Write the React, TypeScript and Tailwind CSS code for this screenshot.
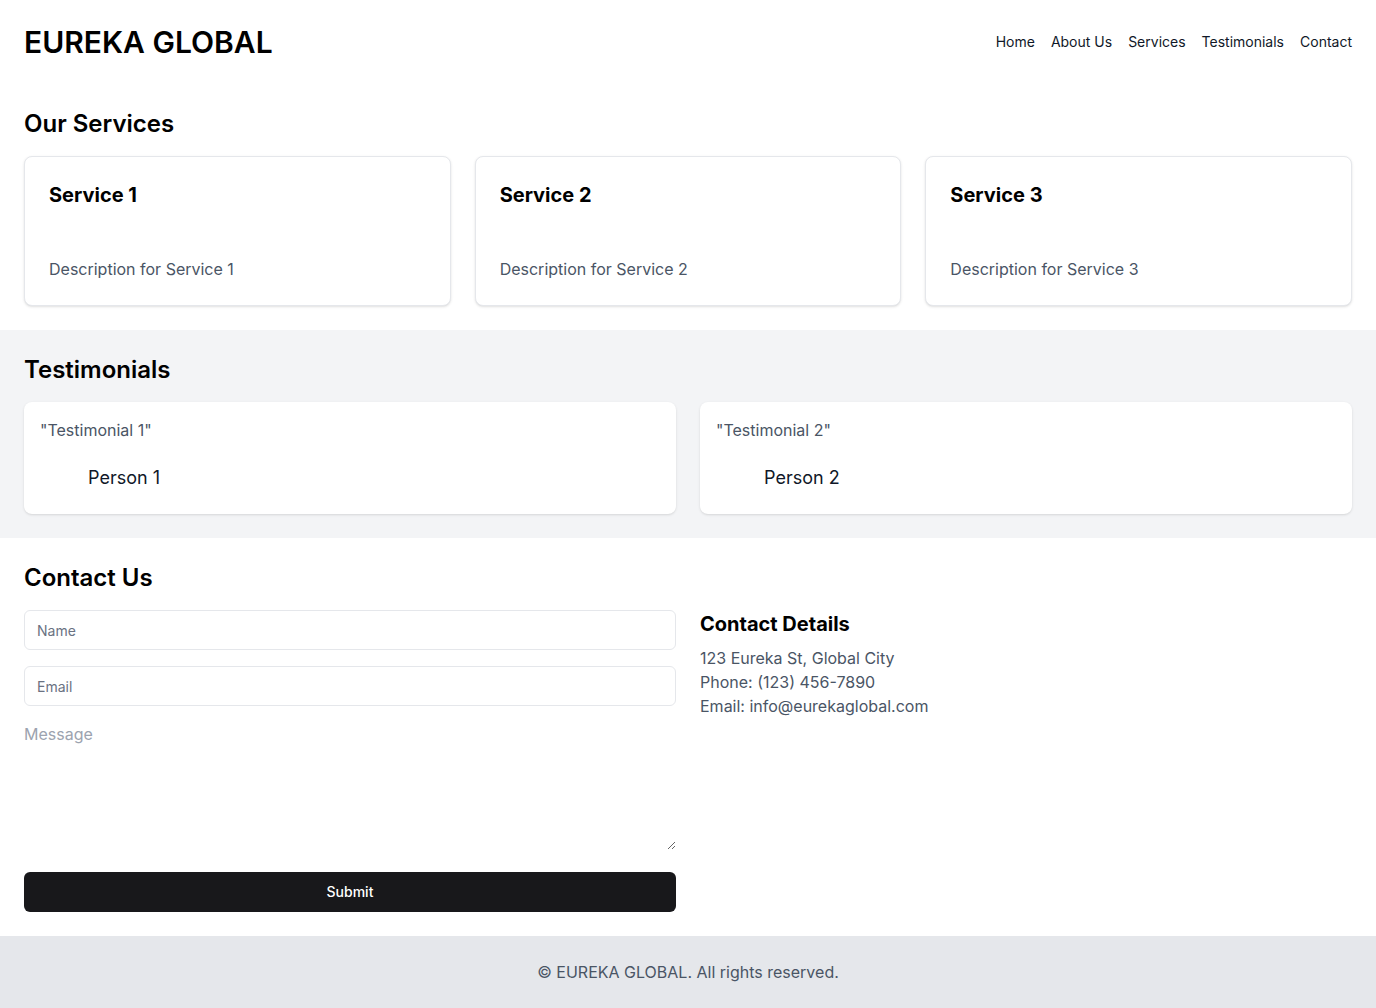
import React from "react";

const services = [
  { title: "Service 1", description: "Description for Service 1" },
  { title: "Service 2", description: "Description for Service 2" },
  { title: "Service 3", description: "Description for Service 3" },
];

const testimonials = [
  { quote: "Testimonial 1", name: "Person 1" },
  { quote: "Testimonial 2", name: "Person 2" },
];

export default function App() {
  return (
    <div className="min-h-screen bg-white text-gray-900 font-['Inter',sans-serif]">
      {/* Header */}
      <header className="flex items-center justify-between p-6">
        <h1 className="text-3xl font-semibold text-black">EUREKA GLOBAL</h1>
        <nav className="flex gap-4 text-sm text-gray-900">
          <a href="#">Home</a>
          <a href="#">About Us</a>
          <a href="#">Services</a>
          <a href="#">Testimonials</a>
          <a href="#">Contact</a>
        </nav>
      </header>

      {/* Services */}
      <section className="p-6">
        <h2 className="text-2xl font-semibold mb-4 text-black">Our Services</h2>
        <div className="grid grid-cols-3 gap-6">
          {services.map((s) => (
            <div key={s.title} className="rounded-lg border border-gray-200 bg-white shadow-sm">
              <div className="p-6">
                <h3 className="text-xl font-bold leading-7 text-black">{s.title}</h3>
              </div>
              <div className="p-6">
                <p className="text-base text-gray-600">{s.description}</p>
              </div>
            </div>
          ))}
        </div>
      </section>

      {/* Testimonials */}
      <section className="bg-gray-100 p-6">
        <h2 className="text-2xl font-semibold mb-4 text-black">Testimonials</h2>
        <div className="grid grid-cols-2 gap-6">
          {testimonials.map((t) => (
            <div key={t.name} className="rounded-lg bg-white p-4 shadow-sm">
              <p className="text-base text-gray-600">"{t.quote}"</p>
              <div className="mt-4 flex items-center">
                <div className="h-10 w-10 rounded-full" />
                <span className="ml-2 text-lg text-gray-900">{t.name}</span>
              </div>
            </div>
          ))}
        </div>
      </section>

      {/* Contact */}
      <section className="p-6">
        <h2 className="text-2xl font-semibold mb-4 text-black">Contact Us</h2>
        <div className="grid grid-cols-2 gap-6">
          <form className="flex flex-col" onSubmit={(e) => e.preventDefault()}>
            <input
              type="text"
              placeholder="Name"
              className="h-10 w-full rounded-md border border-gray-200 bg-white px-3 text-sm placeholder:text-gray-500 outline-none"
            />
            <input
              type="email"
              placeholder="Email"
              className="mt-4 h-10 w-full rounded-md border border-gray-200 bg-white px-3 text-sm placeholder:text-gray-500 outline-none"
            />
            <textarea
              placeholder="Message"
              className="mt-4 block h-[128px] w-full text-base placeholder:text-[#9ca3af] outline-none"
            />
            <button
              type="submit"
              className="mt-[22px] h-10 w-full rounded-md bg-[#18181b] text-sm font-medium text-white"
            >
              Submit
            </button>
          </form>
          <div>
            <h3 className="text-xl font-bold leading-7 mb-2 text-black">Contact Details</h3>
            <p className="text-base text-gray-600">123 Eureka St, Global City</p>
            <p className="text-base text-gray-600">Phone: (123) 456-7890</p>
            <p className="text-base text-gray-600">Email: info@eurekaglobal.com</p>
          </div>
        </div>
      </section>

      {/* Footer */}
      <footer className="bg-gray-200 p-6 text-center text-base text-gray-600">
        © EUREKA GLOBAL. All rights reserved.
      </footer>
    </div>
  );
}
